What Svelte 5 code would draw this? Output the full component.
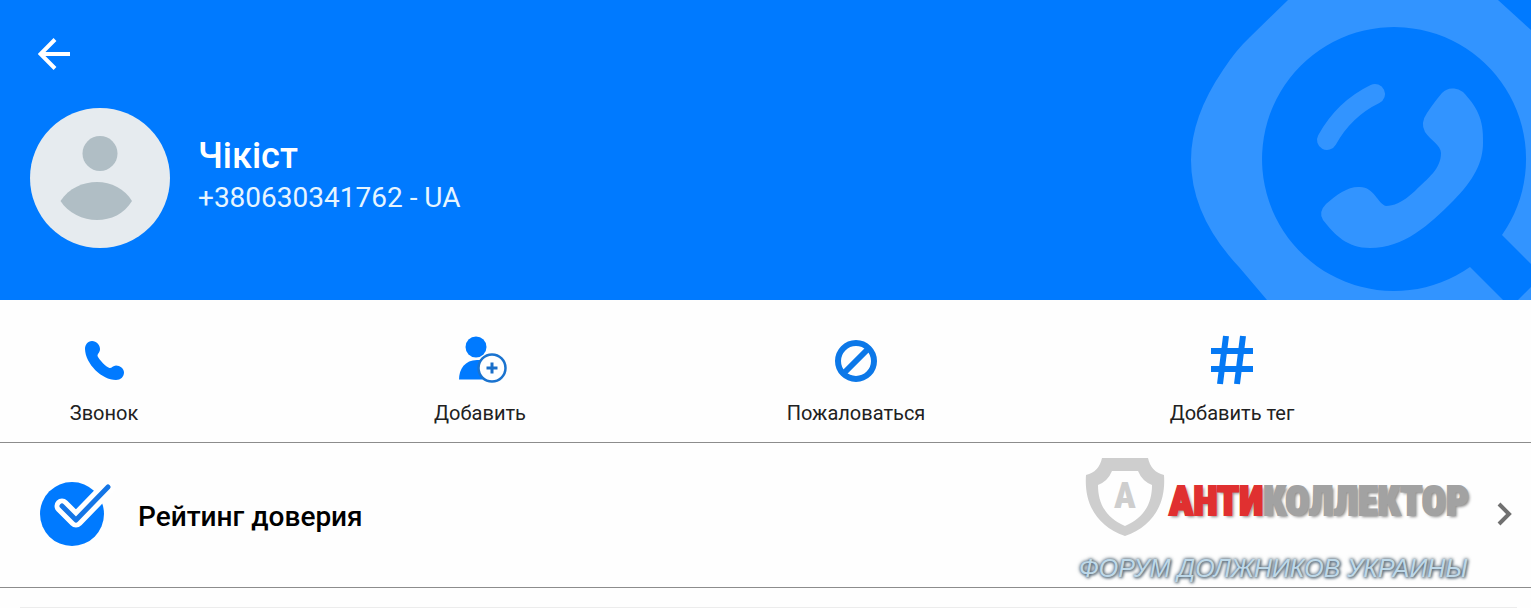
<script lang="ts">
  const contact = { name: "Чікіст", phone: "+380630341762", country: "UA" };

  const actions = [
    { id: "call", label: "Звонок" },
    { id: "add", label: "Добавить" },
    { id: "report", label: "Пожаловаться" },
    { id: "tag", label: "Добавить тег" },
  ];
</script>

<main class="page">
  <header class="header">
    <svg class="header-art" viewBox="0 0 340 300" aria-hidden="true">
      <path
        fill-rule="evenodd"
        d="M97 0 L59 37 Q45 50 32 70 Q0 117 0 160 Q0 216 48 267 L76 300 H312 L279 267 A132 132 0 1 1 311 235 L340 264 V30 L307 0Z M327 300 L340 287 V300Z"
      />
      <path
        d="M262 88.5 Q256 88 251 93 Q244 101 236 113 Q229 123 234 132 C239 140 250 145 250 153 C250 169 237 178 224 191 C211 203 202 206 195 206 C187 204 183 187 169 187 C158 186 146 194 135 204 Q127 212 132 220 C144 235 156 248 179 248 C213 248 238 225 262 201 C283 180 292 162 292 143 C293 118 285 106 272 92 Q267 88 262 88.5Z"
      />
      <path class="glint" d="M136 140 Q153 109 184 94" />
    </svg>
    <button class="back" aria-label="Назад">
      <svg viewBox="0 0 32 32" width="32" height="32">
        <path d="M32 16H3M17 1.5 2.5 16 17 30.5" />
      </svg>
    </button>
    <div class="profile">
      <svg class="avatar" viewBox="0 0 140 140" aria-hidden="true">
        <circle class="avatar-back" cx="70" cy="70" r="70" />
        <circle cx="70" cy="45.500" r="17.500" />
        <path d="M30.500 93C39 80 53 74 67 74s28 7 35 19c-8 13-21 19-35 19s-29-7-36.500-19Z" />
      </svg>
      <div class="profile-text">
        <h1 class="name">{contact.name}</h1>
        <p class="phone">{contact.phone} - {contact.country}</p>
      </div>
    </div>
  </header>

  <nav class="actions">
    {#each actions as action}
      <button class="action">
        <svg viewBox="0 0 48 48" width="48" height="48" aria-hidden="true">
          {#if action.id === "call"}
            <path
              d="M12 5C7.500 5 5 9 5 13c.5 15 17 31 31 31 4.500 0 8-3 8-7.500 0-4-4-7-8-7-3 0-4.500 3-6.500 2.500-3.500-1-10.500-8.500-12-12 0-2.500 2.500-3.500 2.500-7 0-4-3.500-8-8-8Z"
            />
          {:else if action.id === "add"}
            <circle cx="20" cy="11" r="10.500" />
            <path d="M3 43.500C3 33 9 24 21 24h8v19.500Z" />
            <circle class="badge" cx="36" cy="32" r="13.500" />
            <path class="plus" d="M30.500 32h11M36 26.500v11" />
          {:else if action.id === "report"}
            <circle class="ring" cx="24" cy="25" r="18" />
            <path class="ring" d="M36 13 12 37" />
          {:else}
            <path class="hash" d="M18 0 12 48M35 0 29 48M3 15H45M3 33H45" />
          {/if}
        </svg>
        <span>{action.label}</span>
      </button>
    {/each}
  </nav>

  <button class="rating">
    <svg class="rating-icon" viewBox="0 0 72 64" width="72" height="64" aria-hidden="true">
      <circle cx="32" cy="32" r="32" />
      <path class="tick-edge" d="M22 24 36 38 68 5" />
      <path class="tick" d="M22 24 36 38 68 5" />
    </svg>
    <span class="rating-title">Рейтинг доверия</span>
    <svg class="chevron" viewBox="0 0 16 24" width="16" height="24" aria-hidden="true">
      <path d="M2 2 12 12 2 22" />
    </svg>
  </button>

  <div class="next"></div>

  <aside class="watermark">
    <div class="brand">
      <svg viewBox="0 0 80 78" width="80" height="78" aria-hidden="true">
        <path
          fill-rule="evenodd"
          d="M17 0H63Q66 14 79 17C81 45 69 68 40 78C11 68-1 45 1 17Q14 14 17 0ZM27 13Q23 23 13 27C13 47 22 60 40 68C58 60 67 47 67 27Q57 23 53 13Z"
        />
        <text x="40" y="50" text-anchor="middle">А</text>
      </svg>
      <p class="brand-name"><span>АНТИ</span>КОЛЛЕКТОР</p>
    </div>
    <p class="slogan">ФОРУМ ДОЛЖНИКОВ УКРАИНЫ</p>
  </aside>
</main>

<style>
  :global(body) {
    margin: 0;
    background: #fefefe;
  }

  .page {
    position: relative;
    font-family: Roboto, "Liberation Sans", sans-serif;
    color: #000;
  }

  h1,
  p {
    margin: 0;
  }

  button {
    padding: 0;
    border: none;
    background: none;
    font: inherit;
    color: inherit;
    cursor: pointer;
  }

  .header {
    position: relative;
    display: flex;
    flex-direction: column;
    align-items: flex-start;
    gap: 30px;
    padding: 30px 30px 52px;
    background: #007aff;
    color: #fff;
  }

  .header-art {
    position: absolute;
    top: 0;
    right: 0;
    height: 100%;
    fill: #3294ff;
  }

  .glint {
    fill: none;
    stroke: #3294ff;
    stroke-width: 20;
    stroke-linecap: round;
  }

  .back {
    display: flex;
    padding: 8px;
  }

  .back path {
    fill: none;
    stroke: #fff;
    stroke-width: 4;
  }

  .profile {
    display: flex;
    align-items: center;
    gap: 28px;
  }

  .profile-text {
    padding-bottom: 8px;
  }

  .avatar {
    width: 140px;
    height: 140px;
    fill: #b0bec5;
  }

  .avatar-back {
    fill: #e6ebef;
  }

  .name {
    font-size: 36px;
    line-height: 48px;
    font-weight: 500;
  }

  .phone {
    font-size: 28px;
    line-height: 36px;
    color: #e6f5ff;
  }

  .actions {
    display: flex;
    justify-content: space-between;
    padding: 36px 195px 17px 0;
    border-bottom: 1px solid #8c8c8c;
  }

  .action {
    display: flex;
    flex-direction: column;
    align-items: center;
    gap: 17px;
    width: 208px;
    font-size: 20px;
    line-height: 24px;
    color: #212121;
  }

  .action svg {
    fill: #007aff;
    overflow: visible;
  }

  .action .badge {
    fill: #fff;
    stroke: #1a73cf;
    stroke-width: 2.5;
  }

  .plus {
    stroke: #1a6fc9;
    stroke-width: 3;
  }

  .ring {
    fill: none;
    stroke: #0c78e8;
    stroke-width: 6;
  }

  .hash {
    fill: none;
    stroke: #0579f4;
    stroke-width: 6;
  }

  .rating {
    display: flex;
    align-items: center;
    width: 100%;
    padding: 39px 18px 41px 40px;
    border-bottom: 1px solid #8c8c8c;
    text-align: left;
  }

  .rating-icon {
    fill: #007aff;
    overflow: visible;
  }

  .rating-icon path {
    fill: none;
    stroke-linecap: round;
    stroke-linejoin: round;
  }

  .rating-icon .tick-edge {
    stroke: #fff;
    stroke-width: 15;
  }

  .rating-icon .tick {
    stroke: #1475e6;
    stroke-width: 5;
  }

  .rating-title {
    flex: 1;
    padding: 6px 0 0 26px;
    font-size: 28px;
    line-height: 36px;
    font-weight: 500;
  }

  .chevron path {
    fill: none;
    stroke: #707070;
    stroke-width: 4;
  }

  .next {
    margin: 19px 14px 0 20px;
    border-top: 1px solid #ececec;
  }

  .watermark {
    position: absolute;
    right: 62px;
    bottom: 24px;
    pointer-events: none;
  }

  .brand {
    display: flex;
    align-items: center;
    gap: 4px;
    padding-left: 6px;
  }

  .brand svg {
    flex: none;
    fill: #cecece;
  }

  .brand text {
    font-family: Impact, "Roboto Condensed", Roboto, sans-serif;
    font-size: 36px;
    font-weight: 900;
  }

  .brand-name {
    padding-top: 10px;
    font-family: Impact, "Roboto Condensed", Roboto, sans-serif;
    font-size: 40px;
    line-height: 48px;
    font-weight: 900;
    white-space: nowrap;
    color: #a2a2a2;
    -webkit-text-stroke: 2px currentColor;
    text-shadow: 2px 2px 3px #888;
  }

  .brand-name span {
    color: #e03030;
  }

  .slogan {
    margin-top: 16px;
    font-family: "Liberation Sans", sans-serif;
    font-size: 25px;
    line-height: 32px;
    font-style: italic;
    white-space: nowrap;
    color: #bed8e8;
    text-shadow: 0 0 3px #5e707e, 0 0 4px #5e707e, 1px 1px 3px #5e707e;
  }
</style>
